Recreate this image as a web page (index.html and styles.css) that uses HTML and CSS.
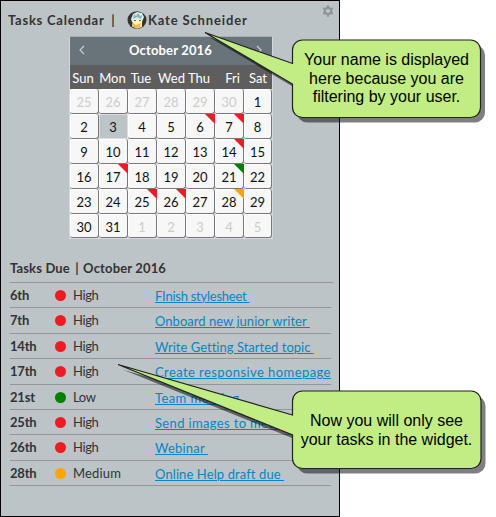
FILE: index.html
```html
<!DOCTYPE html>
<html lang="en">
<head>
<meta charset="utf-8">
<title>Tasks Calendar</title>
<link rel="stylesheet" href="styles.css">
</head>
<body>
<main class="widget">
  <header class="top">
    <span class="title">Tasks Calendar <span class="bar">|</span></span>
    <svg class="avatar" viewBox="0 0 20 18">
      <ellipse cx="10" cy="9" rx="9.5" ry="8.7" fill="#34332f"/>
      <path d="M6 3l4-2 5 1 2 4-2 5H5L4 8z" fill="#d8eeea"/>
      <path d="M7 3l2 2 2-3 2 3 2-1-1 4-4-2-4 2z" fill="#82b8c8"/>
      <path d="M6 8l3 1 4-1 2 1v7l-5 1.500-5-2z" fill="#fff2b5"/>
      <path d="M6 12l3 2 5-2-1 4-4 1-3-1z" fill="#f3b34d"/>
      <path d="M7 9h2v1H7zm5 0h2v1h-2z" fill="#775b45"/>
    </svg>
    <span class="user">Kate Schneider</span>
    <svg class="gear" viewBox="0 0 12 12">
      <circle cx="6" cy="6" r="3.200" fill="none" stroke="#8b959a" stroke-width="2.200"/>
      <path d="M6 .3v2M6 9.700v2M1.100 3.100l1.700 1M9.200 7.900l1.700 1M1.100 8.900l1.700-1M9.200 4.100l1.700-1" stroke="#8b959a" stroke-width="2.200"/>
    </svg>
  </header>
  <section class="calendar">
    <div class="month">
      <svg class="chev" viewBox="0 0 6 10"><path d="M5 1L1 5l4 4"/></svg>
      <span>October 2016</span>
      <svg class="chev" viewBox="0 0 6 10"><path d="M1 1l4 4-4 4"/></svg>
    </div>
    <div class="week"><span class="sun">Sun</span><span class="mon">Mon</span><span class="tue">Tue</span><span>Wed</span><span class="thu">Thu</span><span class="fri">Fri</span><span>Sat</span></div>
    <div class="days">
      <span class="out">25</span><span class="out">26</span><span class="out">27</span><span class="out">28</span><span class="out">29</span><span class="out">30</span><span>1</span>
      <span>2</span><span class="today">3</span><span>4</span><span>5</span><span class="flag high">6</span><span class="flag high">7</span><span>8</span>
      <span>9</span><span>10</span><span>11</span><span>12</span><span>13</span><span class="flag high">14</span><span>15</span>
      <span>16</span><span class="flag high">17</span><span>18</span><span>19</span><span>20</span><span class="flag low">21</span><span>22</span>
      <span>23</span><span>24</span><span class="flag high">25</span><span class="flag high">26</span><span>27</span><span class="flag medium">28</span><span>29</span>
      <span>30</span><span>31</span><span class="out">1</span><span class="out">2</span><span class="out">3</span><span class="out">4</span><span class="out">5</span>
    </div>
  </section>
  <section class="tasks">
    <h2>Tasks Due <span class="divider">|</span> October 2016</h2>
    <div class="task"><b>6th</b><i class="high"></i><span>High</span><a class="t1">FInish stylesheet </a></div>
    <div class="task"><b>7th</b><i class="high"></i><span>High</span><a class="t2">Onboard new junior writer </a></div>
    <div class="task"><b>14th</b><i class="high"></i><span>High</span><a class="t3">Write Getting Started topic </a></div>
    <div class="task"><b>17th</b><i class="high"></i><span>High</span><a class="t4">Create responsive homepage</a></div>
    <div class="task"><b>21st</b><i class="low"></i><span>Low</span><a class="t5">Team meeting</a></div>
    <div class="task"><b>25th</b><i class="high"></i><span>High</span><a class="t6">Send images to media</a></div>
    <div class="task"><b>26th</b><i class="high"></i><span>High</span><a class="t7">Webinar </a></div>
    <div class="task"><b>28th</b><i class="medium"></i><span class="wide">Medium</span><a class="t8">Online Help draft due </a></div>
  </section>
</main>
<svg class="bubbles" viewBox="0 0 496 517">
  <defs>
    <path id="name-bubble" d="M302.500 40H470.500a10 10 0 0 1 10 10V107.500a10 10 0 0 1-10 10H302.500a10 10 0 0 1-10-10V84L205 32.500 292.500 63.500V50a10 10 0 0 1 10-10z"/>
    <path id="task-bubble" d="M302.500 391H471a10 10 0 0 1 10 10V458.500a10 10 0 0 1-10 10H302.500a10 10 0 0 1-10-10V435L118 364.500 292.500 415V401a10 10 0 0 1 10-10z"/>
  </defs>
  <use class="shade" href="#name-bubble" x="4.500" y="5"/>
  <use class="bubble" href="#name-bubble"/>
  <use class="shade" href="#task-bubble" x="4.500" y="5"/>
  <use class="bubble" href="#task-bubble"/>
</svg>
<p class="note note-name">Your name is displayed<br>here because you are<br>filtering by your user.</p>
<p class="note note-tasks">Now you will only see<br>your tasks in the widget.</p>
</body>
</html>
```
FILE: styles.css
```css
* { box-sizing: border-box; }
body { margin: 0; width: 496px; height: 517px; overflow: hidden; background: #fff; position: relative; font: 13px/16px Lato, "Liberation Sans", sans-serif; color: #333; }
.widget { width: 340px; height: 517px; background: #bdc4c8; border: 1px solid #000; }
.top { height: 35px; padding: 11px 0 0 7px; display: flex; align-items: flex-start; font-weight: 700; white-space: nowrap; }
.title { width: 119px; letter-spacing: .75px; }
.bar { margin-left: 3px; }
.avatar { width: 20px; height: 18px; margin-top: -1px; }
.user { margin-left: 1px; letter-spacing: .85px; }
.gear { width: 12px; height: 12px; margin: -7px 5px 0 auto; }
.calendar { width: 204px; margin-left: 68px; border: 1px solid #d5d8da; border-top-color: #a9b0b3; background: #f7f7f7; }
.month { height: 28px; background: #69747a; color: #fff; display: flex; justify-content: space-between; align-items: center; padding: 0 10px 3px 9px; font-weight: 700; letter-spacing: .15px; }
.chev { width: 6px; height: 10px; fill: none; stroke: #c8cdcf; stroke-width: 1.2; }
.week { height: 24px; background: #5e5e5e; color: #fff; display: grid; grid-template-columns: repeat(6, 29px) 28px; text-align: center; line-height: 27px; }
.week .sun, .week .tue, .week .thu { margin-left: -3px; }
.week .mon { margin-left: -2px; }
.week .fri { margin-left: 6px; }
.days { display: grid; grid-template-columns: repeat(6, 29px) 28px; grid-template-rows: repeat(5, 25px) 24px; background: #d9dbdc; color: #111; text-align: center; line-height: 26px; }
.days span { position: relative; background: #f7f7f7; border: solid #777; border-width: 0 1px 1px 0; border-radius: 3px; box-shadow: inset 1px 1px #fff; }
.days .out { color: #ccc; }
.days .today { background: #bdc4c8; border-color: #ddd; border-radius: 0; box-shadow: inset 1px 1px #ddd; }
.high { color: #ed1c24; }
.low { color: #008000; }
.medium { color: #ffa500; }
.days .flag { color: #111; }
.flag::after { content: ""; position: absolute; right: -1px; top: 0; border-top: 10px solid #ed1c24; border-left: 10px solid transparent; }
.flag.low::after { border-top-color: #008000; }
.flag.medium::after { border-top-color: #ffa500; }
.tasks { margin: 21px 8px 0 9px; }
h2 { margin: 0 -2px 0 0; height: 23px; font-size: 13px; line-height: 17px; border-bottom: 1px solid #90969a; letter-spacing: .15px; }
.divider { margin: 0 1px 0 2px; }
.task { display: grid; grid-template-columns: 45px 18px 82px 1fr; height: 25.375px; border-bottom: 1px solid #90969a; line-height: 25px; white-space: pre; }
.task b { letter-spacing: -.2px; }
.task span { letter-spacing: -.4px; }
.task .wide { letter-spacing: .15px; }
.task i { width: 11px; height: 11px; border-radius: 50%; background: currentColor; margin-top: 7px; }
.task a { justify-self: start; color: #0785c4; text-decoration: underline; text-decoration-thickness: 1px; text-underline-offset: 1px; line-height: 27px; }
.t1 { letter-spacing: -.25px; }
.t2 { letter-spacing: .03px; }
.t3 { letter-spacing: .02px; }
.t4 { letter-spacing: .42px; }
.t5 { letter-spacing: .4px; }
.t6 { letter-spacing: .35px; }
.t7 { letter-spacing: .2px; }
.t8 { letter-spacing: .1px; }
.bubbles { position: absolute; left: 0; top: 0; width: 496px; height: 517px; }
.shade { fill: rgba(0, 0, 0, .5); }
.bubble { fill: #c1ed84; stroke: #222; stroke-width: 1.2; }
.note { position: absolute; left: 293px; width: 187px; margin: 0; font: 16px/18.500px "Liberation Sans", sans-serif; color: #000; text-align: center; white-space: nowrap; }
.note-name { top: 51px; }
.note-tasks { top: 412px; }
```
